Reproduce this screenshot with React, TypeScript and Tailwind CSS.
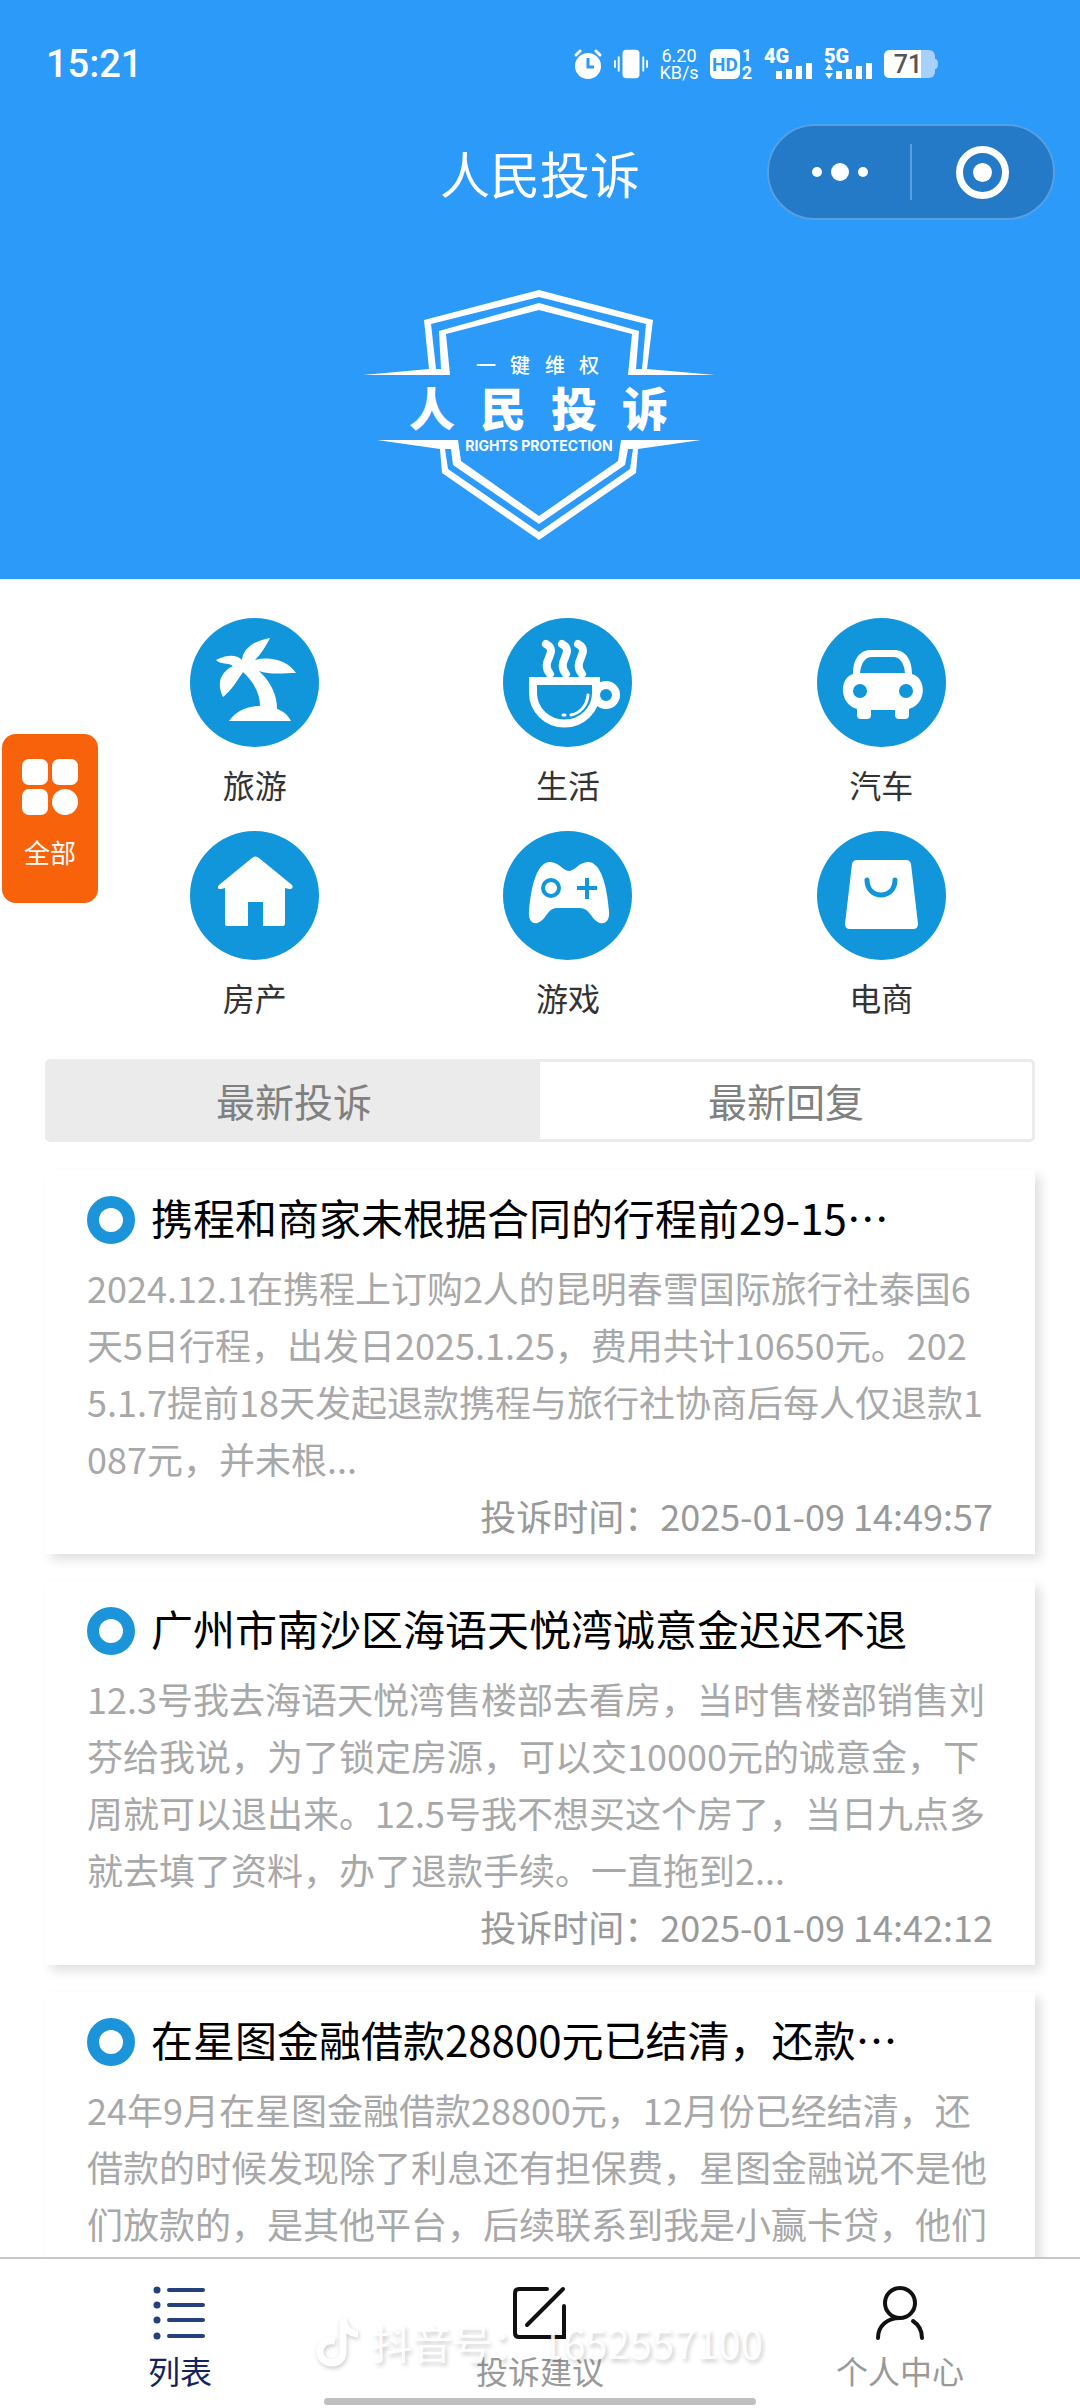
import type { ReactNode } from "react";

const categories = [
    { name: "旅游", icon: <PalmIcon /> },
    { name: "生活", icon: <CupIcon /> },
    { name: "汽车", icon: <CarIcon /> },
    { name: "房产", icon: <HouseIcon /> },
    { name: "游戏", icon: <GamepadIcon /> },
    { name: "电商", icon: <BagIcon /> },
];

const complaints = [
    {
        title: "携程和商家未根据合同的行程前29-15…",
        text: "2024.12.1在携程上订购2人的昆明春雪国际旅行社泰国6天5日行程，出发日2025.1.25，费用共计10650元。2025.1.7提前18天发起退款携程与旅行社协商后每人仅退款1087元，并未根...",
        time: "2025-01-09 14:49:57",
    },
    {
        title: "广州市南沙区海语天悦湾诚意金迟迟不退",
        text: "12.3号我去海语天悦湾售楼部去看房，当时售楼部销售刘芬给我说，为了锁定房源，可以交10000元的诚意金，下周就可以退出来。12.5号我不想买这个房了，当日九点多就去填了资料，办了退款手续。一直拖到2...",
        time: "2025-01-09 14:42:12",
    },
    {
        title: "在星图金融借款28800元已结清，还款…",
        text: "24年9月在星图金融借款28800元，12月份已经结清，还借款的时候发现除了利息还有担保费，星图金融说不是他们放款的，是其他平台，后续联系到我是小赢卡贷，他们",
        time: "",
    },
];

function Disc({ children }: { children: ReactNode }) {
    return (
        <svg className="size-[129px]" viewBox="0 0 129 129" fill="#fff" aria-hidden="true">
            <circle cx="64.5" cy="64.5" r="64.5" fill="#1296db" />
            {children}
        </svg>
    );
}

function PalmIcon() {
    return (
        <Disc>
            <path d="M80 20C63 23 53 31 52 42C46 36 36 37 26 42C31 47 37 44 43 48C29 55 27 67 33 79C41 73 47 63 53 54C64 64 70 76 70 88C56 88 46 93 39 103H101C98 97 93 93 87 91C87 77 81 64 69 53C80 57 94 55 106 55C97 42 80 38 65 42C71 36 76 28 80 20Z" />
        </Disc>
    );
}

function CupIcon() {
    return (
        <Disc>
            <g fill="none" stroke="#fff" strokeLinecap="round">
                <path d="M43 26C57 34 36 43 47 56M59 26C73 34 52 43 63 56M75 26C89 34 68 43 79 56" strokeWidth="8" />
                <path d="M30 63H93V75A31 30 0 0 1 30 75Z" strokeWidth="8" />
                <circle cx="103" cy="77" r="10" strokeWidth="8" />
                <path d="M85 77C84 88 77 95 68 97M62 97H60" strokeWidth="3" />
            </g>
        </Disc>
    );
}

function CarIcon() {
    return (
        <Disc>
            <path d="M36 56C36 42 42 32 54 32H77C89 32 95 42 95 56C110 60 110 86 92 91V97Q92 101 88 101H82Q78 101 78 97V92H54V97Q54 101 50 101H44Q40 101 40 97V91C22 86 22 60 36 56Z" />
            <g fill="#1296db">
                <path d="M43 55H88C87 45 83 39 76 39H55C48 39 44 45 43 55Z" />
                <circle cx="43" cy="73" r="7" />
                <circle cx="89" cy="73" r="7" />
            </g>
        </Disc>
    );
}

function HouseIcon() {
    return (
        <Disc>
            <path d="M62 27Q65 24 69 27L102 54Q104 58 99 58L95 57V92Q95 95 93 95H73V71H58V95H37Q35 95 35 92V57L31 58Q26 58 29 54Z" />
        </Disc>
    );
}

function GamepadIcon() {
    return (
        <Disc>
            <path d="M47 31C56 31 60 40 66 40C72 40 76 31 85 31C98 31 104 55 106 80C107 91 101 93 97 92C89 90 87 77 77 77H54C44 77 43 90 34 92C30 93 25 90 26 80C28 55 34 31 47 31Z" />
            <g fill="none" stroke="#1296db" strokeWidth="4">
                <circle cx="48" cy="57" r="8" />
                <path d="M84 47V68M74 57H94" />
            </g>
        </Disc>
    );
}

function BagIcon() {
    return (
        <Disc>
            <path d="M40 29H89Q93 29 94 33L101 93Q101 98 96 98H33Q28 98 28 93L35 33Q36 29 40 29Z" />
            <path d="M50 49C50 69 78 69 78 49" fill="none" stroke="#1296db" strokeWidth="5" strokeLinecap="round" />
        </Disc>
    );
}

function StatusIcons() {
    return (
        <div className="flex items-center gap-3">
            <svg className="w-[28px] h-[30px]" viewBox="0 0 28 30" aria-hidden="true">
                <circle cx="14" cy="17" r="13" fill="#fff" />
                <path d="M2 6L6 2M26 6L22 2" stroke="#fff" strokeWidth="3" strokeLinecap="round" />
                <path d="M14 9V18H20" fill="none" stroke="#2c9af8" strokeWidth="3" />
            </svg>
            <svg className="w-[34px] h-[30px]" viewBox="0 0 36 30" aria-hidden="true">
                <rect x="9" width="18" height="30" rx="4" fill="#fff" />
                <path d="M1 11V19M5 7V23M31 7V23M35 11V19" stroke="#fff" strokeWidth="2" />
            </svg>
            <div className="flex w-[38px] flex-col items-center text-[18px] leading-[17px]">
                <span>6.20</span>
                <span>KB/s</span>
            </div>
            <svg className="w-[42px] h-[30px] overflow-visible font-bold" viewBox="0 0 42 30" aria-hidden="true">
                <rect width="30" height="30" rx="6" fill="#fff" />
                <text x="15" y="22" textAnchor="middle" fontSize="19" fill="#2c9af8">HD</text>
                <text x="37" y="12" textAnchor="middle" fontSize="17" fill="#fff">1</text>
                <text x="37" y="30" textAnchor="middle" fontSize="18" fill="#fff">2</text>
            </svg>
            <svg className="w-[48px] h-[30px] overflow-visible font-black" viewBox="0 0 48 30" fill="#fff" aria-hidden="true">
                <text x="0" y="14" fontSize="20">4G</text>
                <path d="M12 22h6v8h-6zM22 20h6v10h-6zM32 17h6v13h-6zM42 14h6v16h-6z" />
            </svg>
            <svg className="w-[48px] h-[30px] overflow-visible font-black" viewBox="0 0 48 30" fill="#fff" aria-hidden="true">
                <text x="0" y="14" fontSize="20">5G</text>
                <path d="M5 15l4 6H1zM5 30l4-6H1z" />
                <path d="M12 22h6v8h-6zM22 20h6v10h-6zM32 17h6v13h-6zM42 14h6v16h-6z" />
            </svg>
            <svg className="w-[54px] h-[28px] overflow-visible font-medium" viewBox="0 0 54 28" aria-hidden="true">
                <rect width="51" height="28" rx="6" fill="#a5d1fc" />
                <path d="M51 9Q54 9 54 14Q54 19 51 19Z" fill="#a5d1fc" />
                <path d="M6 0H37V28H6Q0 28 0 22V6Q0 0 6 0Z" fill="#fff" />
                <text x="24" y="23" textAnchor="middle" fontSize="25" fill="#555">71</text>
            </svg>
        </div>
    );
}

function Logo() {
    return (
        <svg className="mx-auto w-[360px] h-[252px]" viewBox="0 0 360 252" fill="#fff" role="img" aria-label="人民投诉">
            {/* upper half of the shield */}
            <path d="M3 86L69 80L64 31L179 1L293 31L287 80L355 86H268L272 45L179 21L86 45L90 86Z" />
            <path d="M76 80L71 35L179 8L286 35L282 80H276L279 42L179 14L79 42L81 80Z" fill="#2c9af8" />
            {/* lower half */}
            <path d="M17 151H98L101 172L179 227L258 172L261 151H341L278 160L276 184L179 251L82 184L80 160Z" />
            <path d="M85 160H91L93 176L179 235L265 176L268 160H273L270 180L179 243L88 180Z" fill="#2c9af8" />
            <g className="font-['Noto_Sans_CJK_SC',sans-serif]" textAnchor="middle">
                <text x="126 160 195 229" y="84" fontSize="20" fontWeight="500">一键维权</text>
                <text x="72 143 214 285" y="137" fontSize="46" fontWeight="900">人民投诉</text>
            </g>
            <text className="font-[Inter]" x="179" y="162" textAnchor="middle" fontSize="14" fontWeight="700">RIGHTS PROTECTION</text>
        </svg>
    );
}

function Header() {
    return (
        <header className="bg-[#2c9af8] pb-[38px] font-[Roboto,'Noto_Sans_CJK_SC',sans-serif] text-white">
            <div className="flex h-[124px] items-center justify-between pt-1 pl-[46px] pr-[142px]">
                <span className="text-[38px] font-medium">15:21</span>
                <StatusIcons />
            </div>
            <div className="grid grid-cols-[1fr_auto_1fr] items-center">
                <h1 className="col-start-2 font-['Noto_Sans_CJK_SC',sans-serif] text-[50px] leading-[72px]">人民投诉</h1>
                <div className="mr-[25px] flex h-24 w-[288px] items-center justify-self-end rounded-full border-2 border-[#559fe3] bg-[#247ac6]">
                    <button className="flex flex-1 items-center justify-center gap-[9px]" aria-label="更多">
                        <i className="size-[10px] rounded-full bg-white" />
                        <i className="size-[18px] rounded-full bg-white" />
                        <i className="size-[10px] rounded-full bg-white" />
                    </button>
                    <span className="h-14 w-[2px] bg-[#559fe3]" />
                    <button className="flex flex-1 justify-center" aria-label="关闭">
                        <span className="flex size-[53px] items-center justify-center rounded-full border-[7px] border-white">
                            <i className="size-[19px] rounded-full bg-white" />
                        </span>
                    </button>
                </div>
            </div>
            <div className="pt-[69px]">
                <Logo />
            </div>
        </header>
    );
}

function TabBar() {
    return (
        <nav className="relative grid shrink-0 grid-cols-3 border-t-2 border-[#c8c8c8] bg-white pt-[27px] pb-[15px] text-[32px] leading-[46px] text-[#999]">
            <a href="#list" className="flex flex-col items-center gap-[7px] text-[#14235e]">
                <svg className="size-[54px]" viewBox="0 0 54 54" stroke="#25407f" strokeLinecap="round" aria-hidden="true">
                    <path d="M16 4H50M16 19H50M16 34H50M16 50H50" strokeWidth="4" />
                    <path d="M4 4h.01M4 19h.01M4 34h.01M4 50h.01" strokeWidth="7" />
                </svg>
                列表
            </a>
            <a href="#suggest" className="flex flex-col items-center gap-[7px]">
                <svg className="size-[54px]" viewBox="0 0 54 54" fill="none" stroke="#111" strokeWidth="4" strokeLinecap="round" aria-hidden="true">
                    <path d="M34 3H6Q2 3 2 7V47Q2 51 6 51H51V20M50 3L14 39" />
                </svg>
                投诉建议
            </a>
            <a href="#me" className="flex flex-col items-center gap-[7px]">
                <svg className="size-[54px]" viewBox="0 0 54 54" fill="none" stroke="#111" strokeWidth="4" strokeLinecap="round" aria-hidden="true">
                    <circle cx="27" cy="17" r="15" />
                    <path d="M27 32C14 32 5 40 5 52M40 35C46 39 49 45 49 52" />
                </svg>
                个人中心
            </a>
            <span className="absolute bottom-[3px] left-1/2 h-[7px] w-[40%] -translate-x-1/2 rounded-full bg-[#bfbfbf]" />
            {/* share watermark floating over the bar */}
            <div className="absolute top-[54px] left-[316px] flex items-center gap-3 text-[40px] leading-[58px] whitespace-pre text-white/90 [text-shadow:2px_3px_4px_#0003]">
                <svg className="w-[44px] h-[50px] drop-shadow-[1px_2px_2px_#0003]" viewBox="0 0 44 50" fill="none" stroke="#fff" strokeWidth="7" aria-hidden="true">
                    <path d="M19 24C9 22 4 29 4 35C4 41 9 46 16 46C23 46 27 41 27 35V2C28 11 34 17 42 17" />
                </svg>
                <span>抖音号： 1652557100</span>
            </div>
        </nav>
    );
}

export default function App() {
    return (
        <div className="relative flex h-screen flex-col bg-white font-['Noto_Sans_CJK_SC',sans-serif]" lang="zh-CN">
            <main className="min-h-0 flex-1 overflow-y-auto [scrollbar-width:none]">
                <Header />

                <section className="ml-[98px] mr-[42px] grid grid-cols-3 gap-y-[20px] pt-[39px]">
                    {categories.map((item) => (
                        <a key={item.name} href="#category" className="flex flex-col items-center gap-[10px] text-[32px] leading-[54px] text-[#333]">
                            {item.icon}
                            {item.name}
                        </a>
                    ))}
                </section>

                <div className="mx-[45px] mt-[35px] grid grid-cols-2 overflow-hidden rounded-[5px] border-3 border-[#ebebeb] text-[39px] leading-[77px] text-[#808080]">
                    <button className="bg-[#ebebeb]">最新投诉</button>
                    <button>最新回复</button>
                </div>

                <div className="mx-[45px] mt-[28px] flex flex-col gap-[27px] pb-[27px]">
                    {complaints.map((item) => (
                        <article key={item.title} className="bg-white px-[42px] pt-[20px] pb-[10px] text-[36px] leading-[57px] shadow-[6px_6px_10px_#0000001f]">
                            <div className="mb-[15px] flex items-end gap-4">
                                <i className="size-12 shrink-0 rounded-full border-12 border-[#1b94d9]" />
                                <h2 className="text-[42px] leading-[54px] text-black">{item.title}</h2>
                            </div>
                            <p className="break-all text-[#a8a8a8]">{item.text}</p>
                            {item.time && <p className="text-right text-[#999]">投诉时间：{item.time}</p>}
                        </article>
                    ))}
                </div>
            </main>

            <TabBar />

            <button className="absolute top-[734px] left-[2px] flex flex-col items-center rounded-[14px] bg-[#f7620b] px-[20px] pt-[25px] pb-[31px] text-[26px] leading-[40px] text-white">
                <svg className="mb-[17px] size-[56px]" viewBox="0 0 56 56" fill="#fff" aria-hidden="true">
                    <rect width="26" height="26" rx="7" />
                    <rect x="30" width="26" height="26" rx="7" />
                    <rect y="30" width="26" height="26" rx="7" />
                    <circle cx="43" cy="43" r="13" />
                </svg>
                全部
            </button>
        </div>
    );
}
